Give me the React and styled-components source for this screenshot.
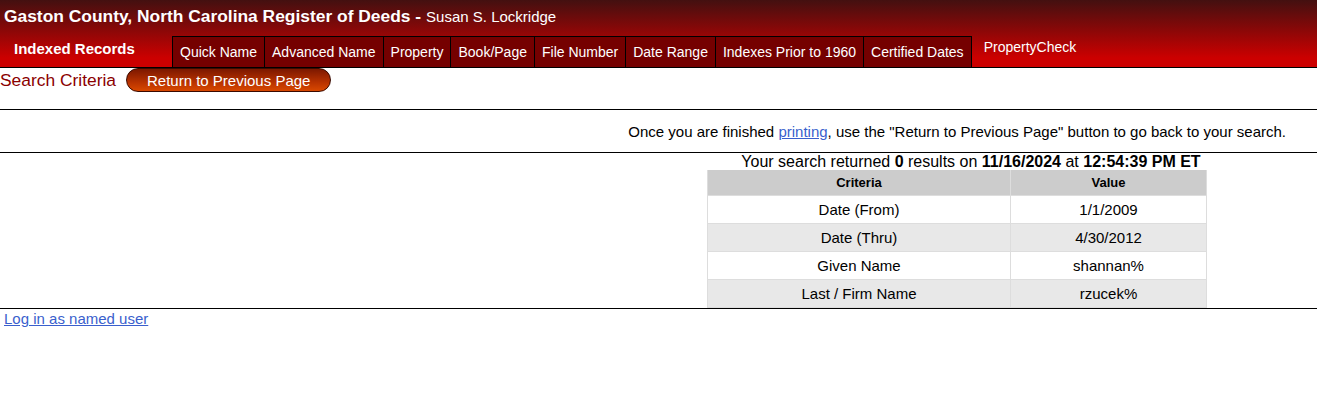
import styled, { createGlobalStyle } from "styled-components";

const GlobalStyle = createGlobalStyle`
  body {
    margin: 0;
    background: #fff;
    font-family: "Liberation Sans", Arial, sans-serif;
    color: #000;
  }
`;

const Header = styled.header`
  height: 67px;
  background: linear-gradient(#431010 0, #cc0000 58px, #cc0000 100%);
  border-bottom: 1px solid #000;
  display: flex;
  flex-direction: column;
`;

const TitleRow = styled.div`
  height: 36px;
  display: flex;
  align-items: center;
  padding: 0 0 4px 4px;
  box-sizing: border-box;
  color: #fff;
  font-size: 15px;
  white-space: nowrap;
`;

const SiteName = styled.span`
  font-weight: bold;
  font-size: 17.4px;
  margin-right: 5px;
`;

const NavRow = styled.nav`
  flex: 1;
  display: flex;
  align-items: stretch;
`;

const Brand = styled.div`
  width: 159px;
  padding: 4px 0 0 14px;
  color: #fff;
  font-weight: bold;
  font-size: 15px;
`;

const Tab = styled.a`
  display: flex;
  align-items: center;
  padding: 0 ${(p) => p.$pad || 7}px;
  color: #fff;
  font-size: 14px;
  text-decoration: none;
  white-space: nowrap;
  background: ${(p) => (p.$plain ? "transparent" : "#750000")};
  border: ${(p) => (p.$plain ? "none" : "1px solid #000")};
  border-bottom: none;
  margin-left: ${(p) => (p.$plain ? 0 : -1)}px;
  align-self: ${(p) => (p.$plain ? "flex-start" : "stretch")};
  height: ${(p) => (p.$plain ? "22px" : "auto")};
`;

const CriteriaBar = styled.div`
  display: flex;
  align-items: center;
  height: 24px;
`;

const CriteriaTitle = styled.span`
  color: #8b0000;
  font-size: 17.4px;
  margin-right: 10px;
`;

const BackButton = styled.button`
  height: 24px;
  padding: 0 20px;
  border: 1px solid #3a0a00;
  border-radius: 12px;
  background: linear-gradient(#7c1800, #b83200 60%, #d84800);
  color: #fff;
  font-family: inherit;
  font-size: 15px;
  cursor: pointer;
`;

const Rule = styled.hr`
  margin: 0;
  border: none;
  border-top: 1px solid #000;
  margin-top: ${(p) => p.$top || 0}px;
`;

const Notice = styled.div`
  height: 42px;
  display: flex;
  align-items: center;
  justify-content: flex-end;
  padding-right: 31px;
  font-size: 15px;
`;

const Link = styled.a`
  color: #3a5fcd;
  text-decoration: underline;
`;

const Results = styled.div`
  display: flex;
`;

const Spacer = styled.div`
  width: 707px;
`;

const ResultsColumn = styled.div`
  width: 528px;
  display: flex;
  flex-direction: column;
`;

const Summary = styled.div`
  text-align: center;
  font-size: 16px;
  line-height: 17px;
  white-space: nowrap;
`;

const Table = styled.table`
  width: 500px;
  border-collapse: collapse;
  font-size: 15px;
`;

const HeadCell = styled.th`
  background: #cccccc;
  font-size: 13px;
  font-weight: bold;
  height: 25px;
  padding: 0;
  border: 1px solid #dddddd;
  border-top: none;
  width: ${(p) => p.$w || "auto"};
`;

const Row = styled.tr`
  background: ${(p) => (p.$alt ? "#e8e8e8" : "#fff")};
`;

const Cell = styled.td`
  height: 27px;
  padding: 0;
  text-align: center;
  border: 1px solid #dddddd;
`;

const Footer = styled.div`
  padding: 1px 4px;
  font-size: 15px;
`;

const tabs = [
  "Quick Name",
  "Advanced Name",
  "Property",
  "Book/Page",
  "File Number",
  "Date Range",
  "Indexes Prior to 1960",
  "Certified Dates",
];

const criteria = [
  ["Date (From)", "1/1/2009"],
  ["Date (Thru)", "4/30/2012"],
  ["Given Name", "shannan%"],
  ["Last / Firm Name", "rzucek%"],
];

export default function App() {
  return (
    <>
      <GlobalStyle />
      <Header>
        <TitleRow>
          <SiteName>Gaston County, North Carolina Register of Deeds -</SiteName>
          Susan S. Lockridge
        </TitleRow>
        <NavRow>
          <Brand>Indexed Records</Brand>
          {tabs.map((t) => (
            <Tab key={t} href="#">
              {t}
            </Tab>
          ))}
          <Tab $plain $pad={12} href="#">
            PropertyCheck
          </Tab>
        </NavRow>
      </Header>
      <CriteriaBar>
        <CriteriaTitle>Search Criteria</CriteriaTitle>
        <BackButton>Return to Previous Page</BackButton>
      </CriteriaBar>
      <Rule $top={17} />
      <Notice>
        <span>
          Once you are finished <Link href="#">printing</Link>, use the
          "Return to Previous Page" button to go back to your search.
        </span>
      </Notice>
      <Rule />
      <Results>
        <Spacer />
        <ResultsColumn>
          <Summary>
            Your search returned <b>0</b> results on <b>11/16/2024</b> at{" "}
            <b>12:54:39 PM ET</b>
          </Summary>
          <Table>
            <thead>
              <tr>
                <HeadCell $w="302px">Criteria</HeadCell>
                <HeadCell>Value</HeadCell>
              </tr>
            </thead>
            <tbody>
              {criteria.map(([k, v], i) => (
                <Row key={k} $alt={i % 2 === 1}>
                  <Cell>{k}</Cell>
                  <Cell>{v}</Cell>
                </Row>
              ))}
            </tbody>
          </Table>
        </ResultsColumn>
      </Results>
      <Rule />
      <Footer>
        <Link href="#">Log in as named user</Link>
      </Footer>
    </>
  );
}
